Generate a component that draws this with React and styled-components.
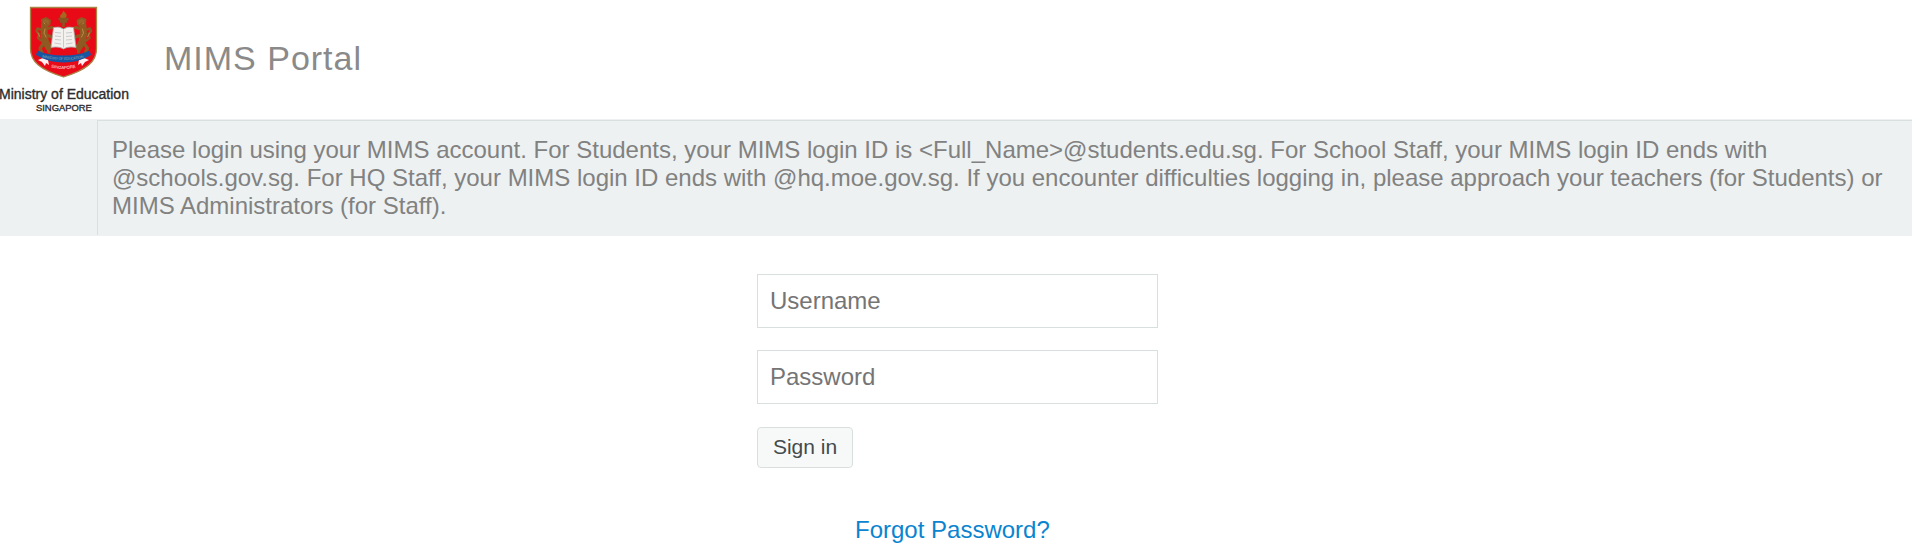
import React from "react";
import styled, { createGlobalStyle } from "styled-components";

const GlobalStyle = createGlobalStyle`
  * { box-sizing: border-box; }
  body {
    margin: 0;
    background: #fff;
    font-family: "Liberation Sans", Arial, sans-serif;
  }
`;

const Page = styled.div`
  display: flex;
  flex-direction: column;
  min-height: 559px;
`;

const Header = styled.header`
  display: flex;
  height: 119px;
  overflow: hidden;
`;

const Logo = styled.svg`
  flex: none;
  display: block;
  width: 130px;
  height: 119px;
`;

const Title = styled.h1`
  margin: 0;
  padding: 39px 0 0 34px;
  font-size: 34px;
  line-height: 39px;
  font-weight: 400;
  letter-spacing: 1px;
  color: #8a8a8a;
`;

const Banner = styled.section`
  display: flex;
  height: 117px;
  padding: 1px 0 1px 97px;
  background: #edf1f2;
`;

const Notice = styled.p`
  flex: 1;
  margin: 0;
  padding: 15px 20px 0 14px;
  border-top: 1px solid #d9e1e0;
  border-left: 1px solid #d9e1e0;
  font-size: 24px;
  line-height: 28px;
  color: #818181;
`;

const LoginForm = styled.form`
  display: flex;
  flex-direction: column;
  align-items: flex-start;
  width: 401px;
  margin: 38px 0 0 757px;
`;

const Field = styled.input`
  width: 100%;
  height: 54px;
  margin: 0 0 22px;
  padding: 0 12px 1px;
  border: 1px solid #d9dfdf;
  border-radius: 0;
  background: #fff;
  font: 24px "Liberation Sans", Arial, sans-serif;
  &::placeholder { color: #757575; opacity: 1; }
`;

const SignIn = styled.button`
  width: 96px;
  height: 41px;
  margin: 1px 0 0;
  padding: 0 0 2px;
  border: 1px solid #d9dfdf;
  border-radius: 4px;
  background: #f7f9f9;
  color: #444b4c;
  font: 21px "Liberation Sans", Arial, sans-serif;
`;

const ForgotLink = styled.a`
  margin: 48px 0 0 98px;
  font-size: 24px;
  line-height: 28px;
  color: #0a84cf;
  text-decoration: none;
`;

const NOTICE_TEXT =
  "Please login using your MIMS account. For Students, your MIMS login ID is <Full_Name>@students.edu.sg. " +
  "For School Staff, your MIMS login ID ends with @schools.gov.sg. For HQ Staff, your MIMS login ID ends with " +
  "@hq.moe.gov.sg. If you encounter difficulties logging in, please approach your teachers (for Students) or " +
  "MIMS Administrators (for Staff).";

const Lion = () => (
  <g fill="none" stroke="#8f5a22" strokeLinecap="round" strokeLinejoin="round">
    <path d="M42 19.500l4-1.500 4 2.500-.5 4-4 2-3-2z" fill="#97652d" strokeWidth="1.800" />
    <path d="M44.500 26l-.5 8 1.500 8 3 5" strokeWidth="7" />
    <path d="M45 29l7-1.500M46 35l6 2M43 44l-3 4.500 2 4M48 46l1 6" strokeWidth="3.200" />
    <path d="M42 41l-4-3 1-4-2.500-3 1-2.500 3 1" strokeWidth="2.400" />
    <path d="M44 23l1 1M45 29l-1 4 2 4M38 33l2 4" stroke="#c48f4a" strokeWidth=".9" />
  </g>
);

const MinistryLogo = () => (
  <Logo viewBox="0 0 130 119" role="img" aria-label="Ministry of Education Singapore">
    <path d="M30.500 7.500h66v41c0 13-9 21-33 28.500-24-7.500-33-15.500-33-28.500z" fill="#e90a18" stroke="#a8864a" strokeWidth="1.300" />
    <Lion />
    <g transform="translate(127.500 0) scale(-1 1)"><Lion /></g>
    <path d="M63.500 10.500c.5 2 4 3 3 6l-1.500 2h-3.500c-3-2-.5-4 .5-5z" fill="#a4681f" />
    <path d="M58.500 19h10M60 21.500h7M63.500 19v8" stroke="#875522" strokeWidth="2.600" />
    <path d="M53.500 27.500q6-1.500 10 1.500 4-3 10-1.500l2.500 20q-8-1.500-12.500 1.500-4.500-3-12.500-1.500z" fill="#f2f1ed" stroke="#aaa9a5" strokeWidth=".8" />
    <path d="M63.500 29.500v18M55 32.500l6 .5M55 36l6 .5M55 39.500l6 .5M54.500 43l6.500 1M66 33l6-.5M66 36.500l6-.5M66 40l6-.5M66 44l6.500-1" stroke="#c5c5c5" strokeWidth=".9" />
    <path d="M38 60l5-2 5 2 1 5-3-2-1 3-3-4zM89 60l-5-2-5 2-1 5 3-2 1 3 3-4z" fill="#fff1f1" />
    <path d="M37.500 50.500q10 5 26 5t26-5l1.500 4.500q-12 7.500-27.500 7.500t-27.500-7.500z" fill="#1756a5" />
    <path id="motto" d="M42 57.500q21.500 5 43 0" fill="none" />
    <text fontSize="3.800" fill="#8aa2aa"><textPath href="#motto" textLength="42">MINISTRY OF EDUCATION</textPath></text>
    <path id="country" d="M51 67.500q12.500 3 25 0" fill="none" />
    <text fontSize="4.300" fill="#ffe5e5"><textPath href="#country" textLength="25">SINGAPORE</textPath></text>
    <text x="-1" y="99" fontSize="14" fill="#2c2c2c" stroke="#2c2c2c" strokeWidth=".35">Ministry of Education</text>
    <text x="36" y="111.300" fontSize="9.400" fill="#2c2c2c" stroke="#2c2c2c" strokeWidth=".35">SINGAPORE</text>
  </Logo>
);

export default function App() {
  return (
    <Page>
      <GlobalStyle />
      <Header>
        <MinistryLogo />
        <Title>MIMS Portal</Title>
      </Header>
      <Banner>
        <Notice>{NOTICE_TEXT}</Notice>
      </Banner>
      <LoginForm onSubmit={(e) => e.preventDefault()}>
        <Field type="text" placeholder="Username" aria-label="Username" />
        <Field type="password" placeholder="Password" aria-label="Password" />
        <SignIn type="submit">Sign in</SignIn>
        <ForgotLink href="#">Forgot Password?</ForgotLink>
      </LoginForm>
    </Page>
  );
}
